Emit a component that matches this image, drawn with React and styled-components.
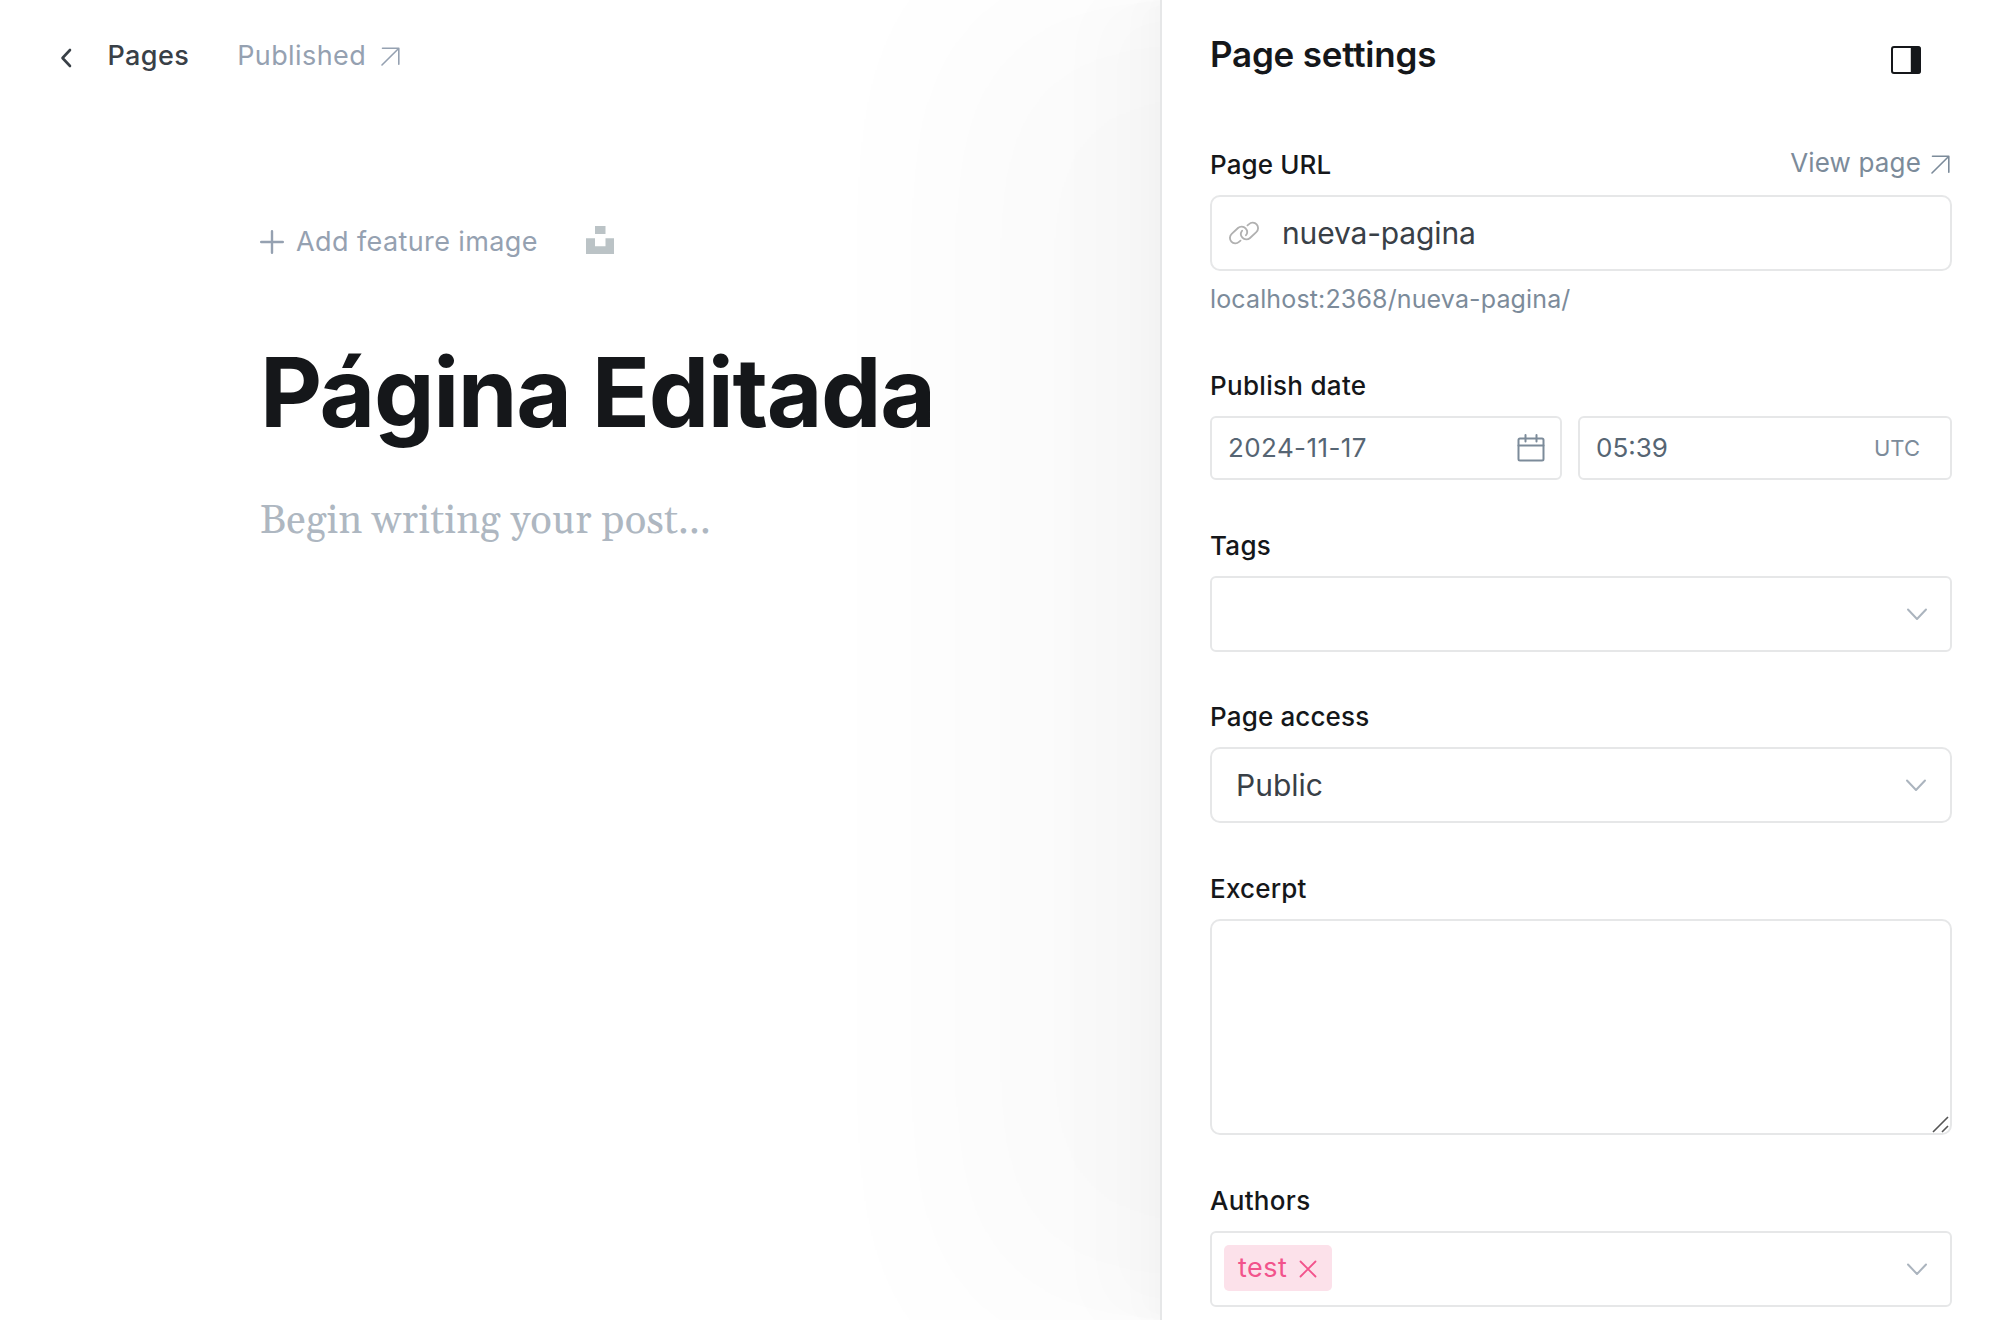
import React from 'react';
import styled, { createGlobalStyle } from 'styled-components';

const Global = createGlobalStyle`
  *, *::before, *::after { box-sizing: border-box; }
  html, body { margin: 0; background: #fff; overflow: hidden; }
  body { font-family: Inter, "Liberation Sans", sans-serif; -webkit-font-smoothing: antialiased; }
  button, input, textarea { font: inherit; color: inherit; }
`;

const Page = styled.div`
  display: flex;
  width: 2000px;
  height: 1320px;
  overflow: hidden;
  background: #fff;
`;

const Editor = styled.main`
  flex: 1;
  min-width: 0;
  padding: 35px 0 0 56px;
`;

const TopBar = styled.nav`
  display: flex;
  align-items: center;
  height: 40px;
`;

const BackLink = styled.a`
  display: flex;
  align-items: center;
  gap: 31.5px;
  color: #394047;
  font-size: 27px;
  font-weight: 500;
  letter-spacing: 0.4px;
  svg { margin-top: 6px; }
`;

const Status = styled.a`
  display: flex;
  align-items: center;
  gap: 15px;
  margin-left: 48px;
  color: #95a1b1;
  font-size: 27px;
  letter-spacing: 0.4px;
  svg { margin-top: 3px; }
`;

const Canvas = styled.section`
  padding: 144px 0 0 204px;
`;

const FeatureRow = styled.div`
  display: flex;
  align-items: center;
  height: 44px;
  color: #95a1b1;
`;

const AddImage = styled.button`
  display: flex;
  align-items: center;
  gap: 12px;
  padding: 0;
  border: 0;
  background: none;
  font-size: 27px;
  letter-spacing: 0.4px;
  svg { margin-top: 2px; }
`;

const Unsplash = styled.svg`
  margin: -3px 0 0 48px;
  fill: #bbc3c6;
`;

const Title = styled.h1`
  margin: 74px 0 0;
  color: #15171a;
  font-size: 96px;
  line-height: 110px;
  font-weight: 700;
  letter-spacing: -1.4px;
  white-space: nowrap;
`;

const Placeholder = styled.p`
  margin: 47px 0 0;
  color: #aeb7c1;
  font-family: Gelasio, Georgia, "Noto Serif", "Liberation Serif", serif;
  font-size: 40px;
  line-height: 56px;
  letter-spacing: 0.2px;
`;

const Panel = styled.aside`
  position: relative;
  width: 840px;
  flex: none;
  padding: 30px 48px 0;
  border-left: 2px solid #e6e7e8;
  background: #fff;
  box-shadow:
    -203px 0 196px rgba(0, 0, 0, 0.022),
    -64px 0 60px rgba(0, 0, 0, 0.014),
    -24px 0 24px rgba(0, 0, 0, 0.013),
    -8px 0 12px rgba(0, 0, 0, 0.012);
`;

const PanelHeader = styled.header`
  display: flex;
  justify-content: space-between;
  align-items: flex-start;
  height: 116px;
`;

const PanelTitle = styled.h2`
  margin: -1px 0 0;
  color: #15171a;
  font-size: 35px;
  line-height: 50px;
  font-weight: 600;
  letter-spacing: -0.22px;
`;

const Toggle = styled.button`
  display: flex;
  margin: 15px 30px 0 0;
  padding: 0;
  border: 0;
  background: none;
`;

const Field = styled.div`
  display: flex;
  flex-direction: column;
  margin-bottom: ${(p) => p.$gap || 0}px;
`;

const LabelRow = styled.div`
  display: flex;
  justify-content: space-between;
  align-items: center;
  height: 36px;
  margin-bottom: 13px;
`;

const Label = styled.label`
  padding-top: 2px;
  color: #15171a;
  font-size: 26px;
  line-height: 36px;
  font-weight: 500;
  letter-spacing: ${(p) => p.$track ?? 0.3}px;
`;

const ViewLink = styled.a`
  display: flex;
  align-items: center;
  gap: 10px;
  margin: -3px 2px 0 0;
  color: #7c8b9a;
  font-size: 26px;
  letter-spacing: 0.15px;
  svg { margin-top: 3px; }
`;

const Box = styled.div`
  display: flex;
  align-items: center;
  justify-content: space-between;
  width: ${(p) => (p.$w ? `${p.$w}px` : '100%')};
  height: ${(p) => p.$h || 76}px;
  padding: ${(p) => p.$pad || '0 24px'};
  border: 2px solid #e6e7e8;
  border-radius: ${(p) => p.$r || 6}px;
  background: #fff;
  color: ${(p) => p.$color || '#394047'};
  font-size: ${(p) => p.$size || 30}px;
`;

const UrlValue = styled.span`
  flex: 1;
  margin-left: 23px;
  letter-spacing: -0.15px;
`;

const DateValue = styled.span`
  padding-bottom: 2px;
  letter-spacing: ${(p) => p.$track || 0}px;
`;

const Hint = styled.p`
  margin: 9px 0 0;
  color: #7c8b9a;
  font-size: 25px;
  line-height: 38px;
  letter-spacing: 0.14px;
`;

const DateRow = styled.div`
  display: flex;
  justify-content: space-between;
`;

const Zone = styled.span`
  color: #7c8b9a;
  font-size: 22px;
`;

const Excerpt = styled.textarea`
  display: block;
  width: 100%;
  height: 216px;
  border: 2px solid #e6e7e8;
  border-radius: 10px;
  outline: 0;
  resize: none;
`;

const ExcerptWrap = styled.div`
  position: relative;
`;

const Grip = styled.svg`
  position: absolute;
  right: 3px;
  bottom: 2px;
`;

const Tag = styled.span`
  display: flex;
  align-items: center;
  gap: 12px;
  height: 46px;
  margin-bottom: 2px;
  padding: 0 15px 2px 14px;
  border-radius: 5px;
  background: #fce1ea;
  color: #f2538c;
  font-size: 27px;
  letter-spacing: 0.5px;
  svg { margin-top: 3px; }
`;

const Arrow = () => (
  <svg width="19" height="19" viewBox="0 0 19 19" fill="none" stroke="currentColor" strokeWidth="1.6" strokeLinecap="round" strokeLinejoin="round">
    <path d="M1.5 1.3H17.8V17.3M17.6 1.5L1 18" />
  </svg>
);

const Chevron = () => (
  <svg width="22" height="14" viewBox="0 0 22 14" fill="none" stroke="#abb4be" strokeWidth="2" strokeLinecap="round" strokeLinejoin="round">
    <path d="M2 2.500L11 12L20 2.500" />
  </svg>
);

const LinkIcon = () => (
  <svg width="30" height="26" viewBox="0 0 30 26" fill="none" stroke="#b0b0b0" strokeWidth="1.8" strokeLinecap="round" strokeLinejoin="round">
    <path d="M11.500 20.600L10 21.900a5.400 5.400 0 0 1-7.300-8L9 8a5.400 5.400 0 0 1 7.600.3a5.400 5.400 0 0 1 .3 7" />
    <path d="M18.500 5.400L20 4.100a5.400 5.400 0 0 1 7.300 8L21 18a5.400 5.400 0 0 1-7.600-.3a5.400 5.400 0 0 1-.3-7" />
  </svg>
);

const CalendarIcon = () => (
  <svg width="28" height="28" viewBox="0 0 28 28" fill="none" stroke="#7c8b9a" strokeWidth="2" strokeLinecap="round" strokeLinejoin="round">
    <rect x="1.5" y="4.5" width="25" height="22" rx="1.5" />
    <path d="M1.5 11.5H26.5M8.5 1V7.5M19.5 1V7.5" />
  </svg>
);

export default function App() {
  return (
    <>
      <Global />
      <Page>
        <Editor>
          <TopBar>
            <BackLink>
              <svg width="20" height="20" viewBox="0 0 20 20" fill="none" stroke="currentColor" strokeWidth="2.6" strokeLinecap="round" strokeLinejoin="round">
                <path d="M14 2L6.5 10L14 18" />
              </svg>
              <span>Pages</span>
            </BackLink>
            <Status>
              <span>Published</span>
              <Arrow />
            </Status>
          </TopBar>
          <Canvas>
            <FeatureRow>
              <AddImage>
                <svg width="24" height="24" viewBox="0 0 24 24" fill="none" stroke="currentColor" strokeWidth="2.4" strokeLinecap="round">
                  <path d="M12 1.2V22.8M1.2 12H22.8" />
                </svg>
                <span>Add feature image</span>
              </AddImage>
              <Unsplash width="28" height="28" viewBox="0 0 28 28">
                <path d="M9 0H19.5V8H9ZM0 12.3H9V20.2H19.5V12.3H28V28H0Z" />
              </Unsplash>
            </FeatureRow>
            <Title>Página Editada</Title>
            <Placeholder>Begin writing your post...</Placeholder>
          </Canvas>
        </Editor>
        <Panel>
          <PanelHeader>
            <PanelTitle>Page settings</PanelTitle>
            <Toggle aria-label="Toggle settings">
              <svg width="32" height="30" viewBox="0 0 32 30">
                <rect x="2" y="2" width="28" height="26" rx="2" fill="none" stroke="#15171a" strokeWidth="2" />
                <path d="M20.800 1.500H29a1.500 1.500 0 0 1 1.500 1.500V27a1.500 1.500 0 0 1-1.500 1.500H20.800Z" fill="#15171a" />
              </svg>
            </Toggle>
          </PanelHeader>
          <Field $gap={49}>
            <LabelRow>
              <Label $track={0.1}>Page URL</Label>
              <ViewLink>
                <span>View page</span>
                <Arrow />
              </ViewLink>
            </LabelRow>
            <Box $r={10} $pad="0 17px">
              <LinkIcon />
              <UrlValue>nueva-pagina</UrlValue>
            </Box>
            <Hint>localhost:2368/nueva-pagina/</Hint>
          </Field>
          <Field $gap={47}>
            <LabelRow><Label>Publish date</Label></LabelRow>
            <DateRow>
              <Box $w={352} $h={64} $pad="0 15px 0 16px" $size={26} $color="#566573">
                <DateValue $track={0.4}>2024-11-17</DateValue>
                <CalendarIcon />
              </Box>
              <Box $w={374} $h={64} $pad="0 30px 0 16px" $size={26} $color="#566573">
                <DateValue>05:39</DateValue>
                <Zone>UTC</Zone>
              </Box>
            </DateRow>
          </Field>
          <Field $gap={46}>
            <LabelRow><Label>Tags</Label></LabelRow>
            <Box $pad="0 22px">
              <span />
              <Chevron />
            </Box>
          </Field>
          <Field $gap={47}>
            <LabelRow><Label $track={0.15}>Page access</Label></LabelRow>
            <Box $r={10} $pad="0 23px 0 24px">
              <span>Public</span>
              <Chevron />
            </Box>
          </Field>
          <Field $gap={47}>
            <LabelRow><Label $track={0.2}>Excerpt</Label></LabelRow>
            <ExcerptWrap>
              <Excerpt aria-label="Excerpt" />
              <Grip width="17" height="17" viewBox="0 0 17 17" stroke="#555" strokeWidth="1.6">
                <path d="M1 16L16 1M10 16L16 10" />
              </Grip>
            </ExcerptWrap>
          </Field>
          <Field>
            <LabelRow><Label>Authors</Label></LabelRow>
            <Box $pad="0 22px 0 12px">
              <Tag>
                <span>test</span>
                <svg width="18" height="18" viewBox="0 0 18 18" fill="none" stroke="currentColor" strokeWidth="1.8" strokeLinecap="round">
                  <path d="M1.500 1.500L16.500 16.500M16.500 1.500L1.500 16.500" />
                </svg>
              </Tag>
              <Chevron />
            </Box>
          </Field>
        </Panel>
      </Page>
    </>
  );
}
